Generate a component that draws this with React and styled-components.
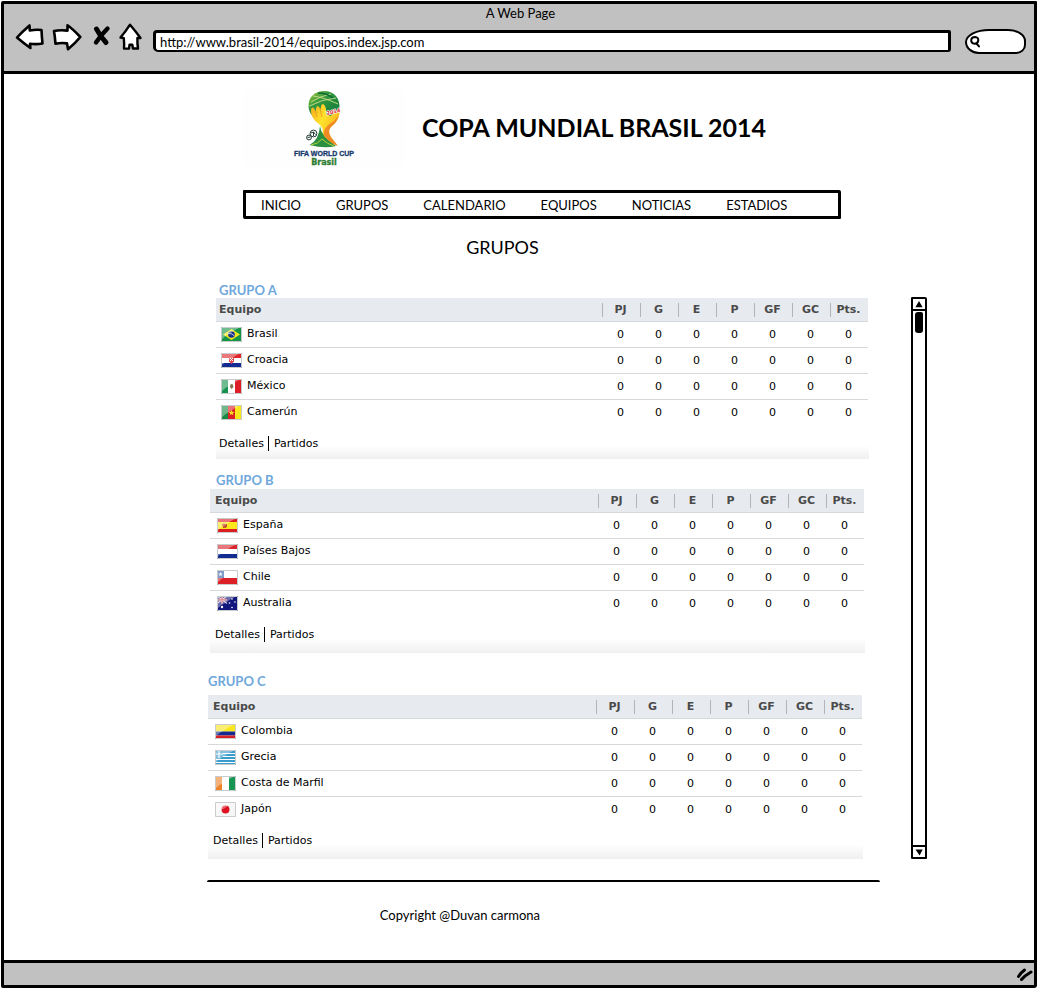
import React from "react";
import styled, { createGlobalStyle } from "styled-components";

const sketchFont = `Lato, "Liberation Sans", Arial, sans-serif`;
const dataFont = `"DejaVu Sans", Verdana, sans-serif`;

const GlobalStyle = createGlobalStyle`
  *, *::before, *::after { box-sizing: border-box; }
  body { margin: 0; background: #fff; color: #000; font: 13px/18px ${sketchFont}; }
  h1, h2, h3, p { margin: 0; }
  button { border: 0; padding: 0; background: none; cursor: pointer; }
  svg { display: block; }
`;

const BrowserFrame = styled.div`
  display: flex;
  flex-direction: column;
  min-height: calc(100vh - 2px);
  margin: 1px;
  border: 3px solid #000;
  border-radius: 2px 1px 3px 2px;
`;

const Chrome = styled.header`
  background: #c1c1c1;
  border-bottom: 3px solid #000;
  padding: 0 8px 12px 11px;
`;

const WindowTitle = styled.p`
  height: 19px;
  line-height: 19px;
  text-align: center;
`;

const Toolbar = styled.div`
  display: flex;
  align-items: center;
  height: 36px;
`;

const ToolButtons = styled.div`
  display: flex;
  align-self: flex-start;
  gap: 8px;
  margin-right: 10px;
`;

const Address = styled.input`
  flex: 1;
  min-width: 0;
  height: 22px;
  padding: 0 4px;
  border: 3px solid #000;
  border-width: 3px 3px 2px;
  border-radius: 4px 2px 3px 5px;
  background: #fff;
  font: 13px/16px ${sketchFont};
  color: #000;
  outline: 0;
`;

const SearchField = styled.label`
  display: flex;
  align-items: center;
  width: 61px;
  height: 25px;
  margin-left: 14px;
  padding-left: 2px;
  border: 2px solid #000;
  border-radius: 24px 18px 10px 14px / 13px 12px 9px 12px;
  background: #fff;
`;

const SearchInput = styled.input`
  flex: 1;
  min-width: 0;
  border: 0;
  padding: 0 4px 0 2px;
  background: transparent;
  font: 13px/16px ${sketchFont};
  outline: 0;
`;

const Page = styled.main`
  flex: 1;
  padding: 15px 107px 0 203px;
`;

const ContentRow = styled.div`
  display: flex;
  gap: 31px;
`;

const Column = styled.div`
  flex: 1;
  min-width: 0;
`;

const Banner = styled.div`
  display: flex;
  align-items: center;
  gap: 17px;
  padding-left: 36px;
  margin-right: 47px;
`;

const LogoBox = styled.div`
  flex: none;
  width: 162px;
  height: 78px;
  padding: 1px 0 0 48px;
  background: #fefefe;
`;

const SiteTitle = styled.h1`
  font-size: 25px;
  line-height: 28px;
  font-weight: 700;
  padding-bottom: 2px;
  white-space: nowrap;
`;

const NavBar = styled.nav`
  display: flex;
  align-items: center;
  gap: 35px;
  height: 29px;
  margin: 23px 86px 0 36px;
  padding: 0 15px;
  border: 3px solid #000;
  border-radius: 1px 2px 1px 2px;
`;

const NavLink = styled.a`
  color: #000;
  text-decoration: none;
`;

const PageHeading = styled.h2`
  margin: 16px 0 23px;
  padding-left: 36%;
  font-size: 18px;
  line-height: 24px;
  font-weight: 400;
`;

const Group = styled.section`
  margin: ${(p) => p.$inset};
  padding-top: ${(p) => p.$space}px;
`;

const GroupTitle = styled.h3`
  padding-left: ${(p) => p.$pad}px;
  margin-bottom: ${(p) => p.$gap}px;
  color: #6fa8dc;
  font-size: 13px;
  line-height: 16px;
  font-weight: 700;
`;

const Table = styled.table`
  width: 100%;
  table-layout: fixed;
  border-collapse: collapse;
  font: 11px/14px ${dataFont};
`;

const HeadRow = styled.tr`
  height: 23px;
  background: #e7ebef;
  border-bottom: 1px solid #d5d9dc;
  color: #4a4a4a;
`;

const TeamHead = styled.th`
  padding: 2px 0 0 ${(p) => p.$pad}px;
  text-align: left;
`;

const StatHead = styled.th`
  width: 38px;
  padding: 2px 0 0;
`;

const StatLabel = styled.span`
  display: block;
  padding-right: 2px;
  border-left: 1px solid #b0b5b9;
`;

const TeamRow = styled.tr`
  height: 26px;

  &:not(:last-child) { border-bottom: 1px solid #d8d8d8; }
`;

const TeamCell = styled.td`
  padding: 0 0 0 ${(p) => p.$pad + 2}px;
`;

const Team = styled.div`
  display: flex;
  align-items: center;
  gap: 5px;
`;

const TeamName = styled.span`
  padding-bottom: 1px;
`;

const StatCell = styled.td`
  padding: 2px 1px 0 0;
  text-align: center;
`;

const GroupLinks = styled.div`
  display: flex;
  align-items: flex-start;
  height: ${(p) => p.$height}px;
  padding: 10px 0 0 ${(p) => p.$pad}px;
  margin-right: -1px;
  background: linear-gradient(#fff 60%, #f0f0f0);
  font: 11px/18px ${dataFont};
`;

const GroupLink = styled.a`
  color: #000;
  text-decoration: none;

  & + & {
    position: relative;
    margin-left: 10px;
  }

  & + &::before {
    content: "";
    position: absolute;
    left: -6px;
    top: 1px;
    width: 1px;
    height: 15px;
    background: #000;
  }
`;

const Scrollbar = styled.div`
  display: flex;
  flex-direction: column;
  width: 16px;
  margin: 15px 0 0;
  border: 2px solid #000;
  border-radius: 1px 2px 1px 1px;
`;

const ScrollButton = styled.button`
  display: flex;
  align-items: center;
  justify-content: center;
  height: 10px;
`;

const ScrollTrack = styled.div`
  flex: 1;
  padding: 1px 2px;
  border: solid #000;
  border-width: 2px 0;
`;

const ScrollThumb = styled.div`
  height: 21px;
  background: #000;
  border-radius: 3px 2px 3px 3px;
`;

const SiteFooter = styled.footer`
  margin: 21px 47px 0 0;
  padding: 24px 0 24px 24%;
  border-top: 2px solid #000;
  border-radius: 2px;
`;

const StatusBar = styled.div`
  display: flex;
  justify-content: flex-end;
  align-items: center;
  height: 25px;
  padding-right: 1px;
  border-top: 3px solid #000;
  background: #c1c1c1;
`;

const sketchStroke = {
  fill: "#fff",
  stroke: "#000",
  strokeWidth: 2.6,
  strokeLinejoin: "round",
  strokeLinecap: "round",
};

const BackIcon = () => (
  <svg width="29" height="28" viewBox="0 0 29 28" {...sketchStroke}>
    <path d="M2 14.5 Q7 9 14.5 2.5 L14.8 7.5 Q21 6.2 26.5 7 Q26.8 14 27.5 20.5 Q21 21.6 15 20.8 L15.4 25 Q9 20.5 2 14.5Z" />
  </svg>
);

const ForwardIcon = () => (
  <svg width="30" height="28" viewBox="0 0 30 28" {...sketchStroke}>
    <path d="M2 8 Q8 6.6 15.5 7.6 L15.5 2.2 Q21 6 28.3 14 Q23 20.5 16 26.2 L15 20.4 Q9 19.5 3.5 20.8 Q3 14 2 8Z" />
  </svg>
);

const StopIcon = () => (
  <svg width="21" height="28" viewBox="0 0 21 28" fill="none" stroke="#000" strokeLinecap="round">
    <path d="M6.5 6 Q10 13 16 19.5" strokeWidth="5" />
    <path d="M17.5 5.5 Q11 12 6 19.5" strokeWidth="4.4" />
  </svg>
);

const HomeIcon = () => (
  <svg width="24" height="28" viewBox="0 0 24 28" {...sketchStroke} strokeWidth="2.4">
    <path d="M1.5 14.5 Q6 9.5 11 1.7 Q16.5 8 21.5 15 L18.4 15 Q18.2 21 19 25.5 L14 25.5 L13.3 21.8 L10.5 21.8 L10 25.6 L5 25.6 Q5.4 21 4.8 15.2Z" />
  </svg>
);

const SearchIcon = () => (
  <svg width="12" height="13" viewBox="0 0 12 13" fill="none" stroke="#000" strokeWidth="2" strokeLinecap="round">
    <path d="M2.2 5.5 Q2.2 2 6 2 Q9.8 2.2 9.2 5.8 Q8.6 8.8 5.5 8.8 Q2.4 8.4 2.2 5.5Z" />
    <path d="M7.5 8.5 L10 11.4" />
  </svg>
);

const ResizeIcon = () => (
  <svg width="17" height="15" viewBox="0 0 17 15" fill="none" stroke="#000" strokeWidth="3" strokeLinecap="round">
    <path d="M2.5 9.5 Q5 5.500 8.500 3 M5.500 12.500 Q9 8.500 15 5" />
  </svg>
);

const UpIcon = () => (
  <svg width="8" height="7" viewBox="0 0 8 7"><path d="M4 0 L7.6 6.2 L.4 6.2Z" /></svg>
);

const DownIcon = () => (
  <svg width="8" height="7" viewBox="0 0 8 7"><path d="M.5 .5 L7.7 .5 L4.6 6.6Z" /></svg>
);

const WorldCupLogo = () => (
  <svg width="68" height="77" viewBox="0 0 68 77" role="img" aria-label="FIFA World Cup Brasil">
    <defs>
      <linearGradient id="cupGreen" x1="0" y1="0" x2="1" y2="1">
        <stop offset="0" stopColor="#a8c83a" />
        <stop offset=".35" stopColor="#35993f" />
        <stop offset="1" stopColor="#08753a" />
      </linearGradient>
      <linearGradient id="cupGold" x1="0" y1="0" x2="1" y2=".7">
        <stop offset="0" stopColor="#f5a81c" />
        <stop offset=".45" stopColor="#ffe32a" />
        <stop offset="1" stopColor="#f6a51c" />
      </linearGradient>
    </defs>
    <path d="M17.500 17 C17 6 25 1 33 1 C43 1 49 8 48.500 18 L45 27 L24 28 Q18 24 17.500 17Z" fill="url(#cupGreen)" />
    <path d="M20 12 Q29 6 40 4 M18.500 16 Q31 9 45 8 M22 6 Q32 7 47 14" fill="none" stroke="#cfe08a" strokeWidth=".9" />
    <path d="M27 3 Q36 3 42 8" fill="none" stroke="#0b6a35" strokeWidth="1.6" />
    <path d="M20 19 Q22 16 23.500 19 L25.500 24 Q24 17 26.500 16 Q29 16 30 23 Q29 14 32 14 Q35 15 35.500 24 L39 26 L48.500 20 Q49.500 29 42 35 Q35 40 38 46 L46 55 Q34 52 31.500 44 Q33 38 28 34 Q19 28 20 19Z" fill="url(#cupGold)" />
    <path d="M47.500 26 Q46 32 41 36 Q36 40 40 47 L47 56 Q37 53 33 45 Q32 39 38 34.500 Q44 31 47.500 26Z" fill="#f08a22" />
    <path d="M24 20 L26 27 M29 18 L31 27" stroke="#ef9c1c" strokeWidth=".8" />
    <path d="M29 36 Q30 47 45 56 Q34 59 18.500 55 Q28 50 29 36Z" fill="#2a8f41" />
    <path d="M20 55 Q27 54 31 49 Q36 54 43 56" fill="none" stroke="#b3cf3b" strokeWidth="1" />
    <g fill="#fff" stroke="#233b35" strokeWidth="1">
      <circle cx="22.500" cy="43.500" r="3.400" />
      <circle cx="18" cy="47.500" r="2.400" />
      <path d="M20 43 L22.500 42 L24.500 44.500 M22.500 42 V46 M16.500 47.500 L19.500 47" fill="none" />
    </g>
    <text x="36" y="25" fill="#d91f2a" stroke="#fff" strokeWidth="1.200" paintOrder="stroke" fontFamily="DejaVu Sans" fontWeight="700" fontSize="5" transform="rotate(-14 36 25)">2014</text>
    <text x="33" y="66" textAnchor="middle" fill="#173a6d" stroke="#173a6d" strokeWidth=".3" fontFamily="Liberation Sans" fontWeight="700" fontSize="7">FIFA WORLD CUP</text>
    <text x="33" y="75" textAnchor="middle" fill="#2e7d32" stroke="#2e7d32" strokeWidth=".3" fontFamily="DejaVu Sans" fontWeight="700" fontSize="8">Brasil</text>
  </svg>
);

const flagArt = {
  Brasil: (
    <>
      <path fill="#159447" d="M0 0h21v15H0z" />
      <path fill="#f5e51b" d="M10.500 2 19 7.500 10.500 13 2 7.500z" />
      <circle cx="10.500" cy="7.500" r="3.300" fill="#17318c" />
      <path d="M7.500 6.500 Q11 6 13.500 9" fill="none" stroke="#dfe8f5" strokeWidth=".8" />
    </>
  ),
  Croacia: (
    <>
      <path fill="#e0262b" d="M0 0h21v5H0z" />
      <path fill="#fff" d="M0 5h21v5H0z" />
      <path fill="#112a94" d="M0 10h21v5H0z" />
      <path fill="#e0484b" d="M8 4h5v4.500l-2.500 2.500L8 8.500z" />
      <path fill="#fff" d="M9 5h1v1H9zM11 5h1v1h-1zM10 6h1v1h-1zM9 7h1v1H9zM11 7h1v1h-1z" />
    </>
  ),
  "México": (
    <>
      <path fill="#159150" d="M0 0h7v15H0z" />
      <path fill="#fff" d="M7 0h7v15H7z" />
      <path fill="#df1d27" d="M14 0h7v15h-7z" />
      <path fill="#80764a" d="M9.500 5 11.500 5 12.500 8 10.500 10 9 8z" />
    </>
  ),
  "Camerún": (
    <>
      <path fill="#198a45" d="M0 0h7v15H0z" />
      <path fill="#dc1f27" d="M7 0h7v15H7z" />
      <path fill="#f8e71c" d="M14 0h7v15h-7z" />
      <path fill="#f8e71c" d="m10.500 5 .8 1.800 2 .1-1.500 1.300.5 2-1.800-1.100-1.800 1.100.5-2-1.500-1.300 2-.1z" />
    </>
  ),
  "España": (
    <>
      <path fill="#dc1d22" d="M0 0h21v15H0z" />
      <path fill="#fbe71b" d="M0 4h21v7H0z" />
      <path fill="#c4552d" d="M5 6h1l1-1 1 1h2v3l-1.500 1H6V8H5z" />
    </>
  ),
  "Países Bajos": (
    <>
      <path fill="#d9252b" d="M0 0h21v5H0z" />
      <path fill="#fff" d="M0 5h21v5H0z" />
      <path fill="#132c91" d="M0 10h21v5H0z" />
    </>
  ),
  Chile: (
    <>
      <path fill="#fff" d="M0 0h21v8H0z" />
      <path fill="#db2027" d="M0 8h21v7H0z" />
      <path fill="#345fa8" d="M0 0h7v8H0z" />
      <path fill="#fff" d="m3.500 2 .6 1.400 1.500.1-1.200 1 .4 1.500-1.300-.8L2.200 6l.4-1.500-1.200-1 1.500-.1z" />
    </>
  ),
  Australia: (
    <>
      <path fill="#12177d" d="M0 0h21v15H0z" />
      <path d="M0 0 10 7.500M10 0 0 7.500" stroke="#c9bfd8" strokeWidth="1.200" />
      <path d="M5 0v7.500M0 3.800h10" stroke="#e6dbe6" strokeWidth="1.600" />
      <path d="M5 0v7.500M0 3.800h10" stroke="#d4232b" />
      <g fill="#fff">
        <circle cx="5" cy="11" r="1.200" />
        <circle cx="15" cy="3" r=".8" />
        <circle cx="15" cy="11.500" r=".8" />
        <circle cx="12.500" cy="7" r=".8" />
        <circle cx="18" cy="6" r=".8" />
      </g>
    </>
  ),
  Colombia: (
    <>
      <path fill="#f9e61d" d="M0 0h21v7.500H0z" />
      <path fill="#14298d" d="M0 7.500h21v4H0z" />
      <path fill="#d91f26" d="M0 11.500h21V15H0z" />
    </>
  ),
  Grecia: (
    <>
      <path fill="#3a9ccc" d="M0 0h21v15H0z" />
      <path d="M8 3.500h13M8 6.500h13M0 9.500h21M0 12.500h21M4 0v8M0 4h8" stroke="#fff" strokeWidth="1.200" />
    </>
  ),
  "Costa de Marfil": (
    <>
      <path fill="#ee842b" d="M0 0h7v15H0z" />
      <path fill="#fff" d="M7 0h7v15H7z" />
      <path fill="#179653" d="M14 0h7v15h-7z" />
    </>
  ),
  "Japón": (
    <>
      <path fill="#f6f6f6" d="M0 0h21v15H0z" />
      <circle cx="10.500" cy="7.500" r="4" fill="#dc1222" />
    </>
  ),
};

const Flag = ({ name }) => (
  <svg width="21" height="15" viewBox="0 0 21 15" aria-hidden="true">
    {flagArt[name]}
    <path d="M0 0h20Q13 3 9 6.500Q4 8.500 0 13z" fill="#fff" opacity=".38" />
    <path d="M.5 .5h20v14H.5z" fill="none" stroke="#c9cccc" />
  </svg>
);

const navItems = ["INICIO", "GRUPOS", "CALENDARIO", "EQUIPOS", "NOTICIAS", "ESTADIOS"];
const stats = ["PJ", "G", "E", "P", "GF", "GC", "Pts."];

const groups = [
  {
    title: "GRUPO A", inset: "0 12px 0 9px", space: 0, titlePad: 3, titleGap: 0, pad: 3, linksHeight: 34,
    teams: ["Brasil", "Croacia", "México", "Camerún"],
  },
  {
    title: "GRUPO B", inset: "0 16px 0 3px", space: 13, titlePad: 6, titleGap: 1, pad: 5, linksHeight: 37,
    teams: ["España", "Países Bajos", "Chile", "Australia"],
  },
  {
    title: "GRUPO C", inset: "0 18px 0 1px", space: 20, titlePad: 0, titleGap: 6, pad: 5, linksHeight: 37,
    teams: ["Colombia", "Grecia", "Costa de Marfil", "Japón"],
  },
];

const GroupTable = ({ group }) => (
  <Group $inset={group.inset} $space={group.space}>
    <GroupTitle $pad={group.titlePad} $gap={group.titleGap}>{group.title}</GroupTitle>
    <Table aria-label={group.title}>
      <thead>
        <HeadRow>
          <TeamHead $pad={group.pad} scope="col">Equipo</TeamHead>
          {stats.map((s) => (
            <StatHead key={s} scope="col"><StatLabel>{s}</StatLabel></StatHead>
          ))}
        </HeadRow>
      </thead>
      <tbody>
        {group.teams.map((team) => (
          <TeamRow key={team}>
            <TeamCell $pad={group.pad}>
              <Team><Flag name={team} /><TeamName>{team}</TeamName></Team>
            </TeamCell>
            {stats.map((s) => <StatCell key={s}>0</StatCell>)}
          </TeamRow>
        ))}
      </tbody>
    </Table>
    <GroupLinks $height={group.linksHeight} $pad={group.pad}>
      <GroupLink href="#detalles">Detalles</GroupLink>
      <GroupLink href="#partidos">Partidos</GroupLink>
    </GroupLinks>
  </Group>
);

export default function App() {
  return (
    <>
      <GlobalStyle />
      <BrowserFrame>
        <Chrome>
          <WindowTitle>A Web Page</WindowTitle>
          <Toolbar>
            <ToolButtons>
              <button aria-label="Back"><BackIcon /></button>
              <button aria-label="Forward"><ForwardIcon /></button>
              <button aria-label="Stop"><StopIcon /></button>
              <button aria-label="Home"><HomeIcon /></button>
            </ToolButtons>
            <Address aria-label="Address" defaultValue="http://www.brasil-2014/equipos.index.jsp.com" />
            <SearchField>
              <SearchIcon />
              <SearchInput type="text" aria-label="Search" />
            </SearchField>
          </Toolbar>
        </Chrome>
        <Page>
          <Banner>
            <LogoBox><WorldCupLogo /></LogoBox>
            <SiteTitle>COPA MUNDIAL BRASIL 2014</SiteTitle>
          </Banner>
          <NavBar>
            {navItems.map((item) => (
              <NavLink key={item} href={`#${item.toLowerCase()}`}>{item}</NavLink>
            ))}
          </NavBar>
          <PageHeading>GRUPOS</PageHeading>
          <ContentRow>
            <Column>
              {groups.map((g) => <GroupTable key={g.title} group={g} />)}
            </Column>
            <Scrollbar>
              <ScrollButton aria-label="Scroll up"><UpIcon /></ScrollButton>
              <ScrollTrack><ScrollThumb /></ScrollTrack>
              <ScrollButton aria-label="Scroll down"><DownIcon /></ScrollButton>
            </Scrollbar>
          </ContentRow>
          <SiteFooter>Copyright @Duvan carmona</SiteFooter>
        </Page>
        <StatusBar><ResizeIcon /></StatusBar>
      </BrowserFrame>
    </>
  );
}
